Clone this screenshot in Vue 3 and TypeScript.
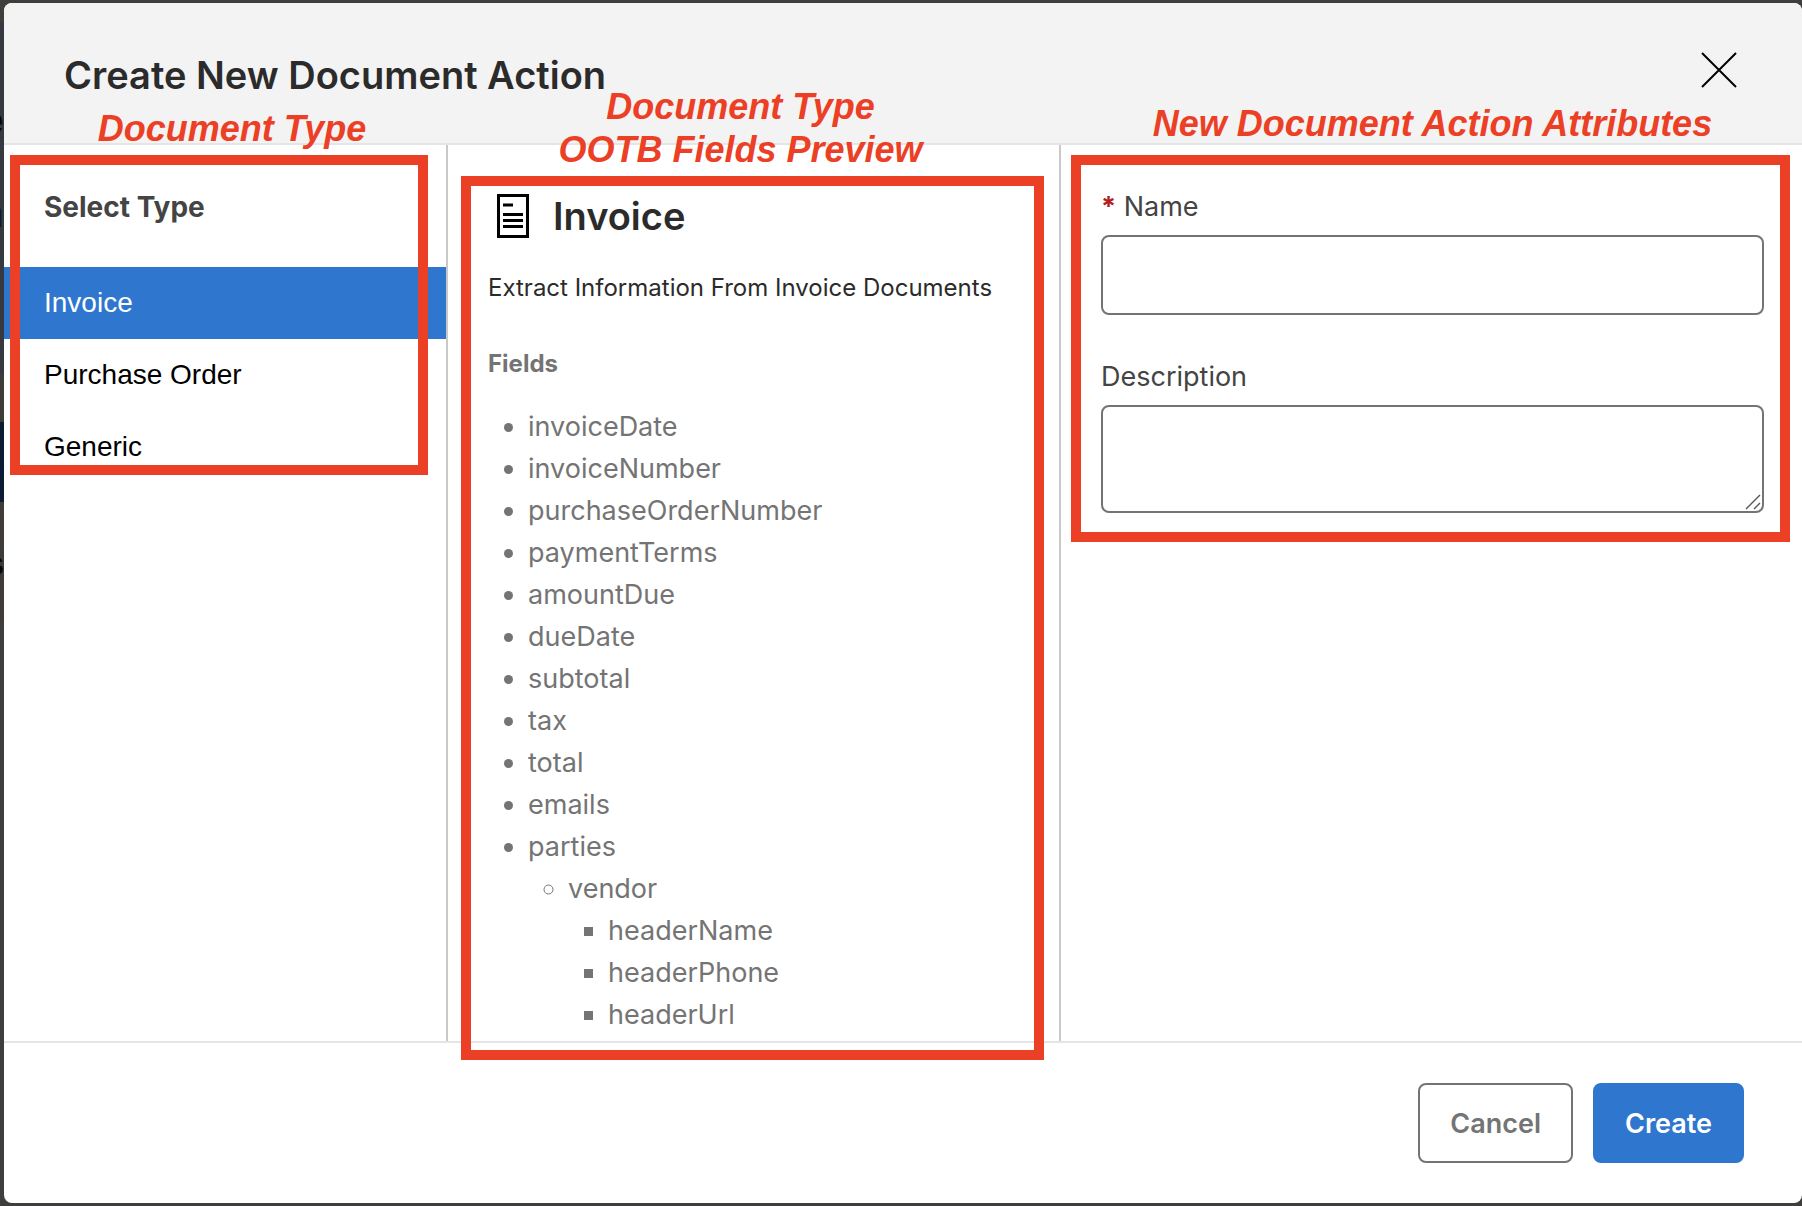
<script setup lang="ts">
import { ref } from 'vue'

interface Field {
  name: string
  children?: Field[]
}

const types = ['Invoice', 'Purchase Order', 'Generic']
const selected = ref('Invoice')
const name = ref('')
const description = ref('')

const fields: Field[] = [
  { name: 'invoiceDate' },
  { name: 'invoiceNumber' },
  { name: 'purchaseOrderNumber' },
  { name: 'paymentTerms' },
  { name: 'amountDue' },
  { name: 'dueDate' },
  { name: 'subtotal' },
  { name: 'tax' },
  { name: 'total' },
  { name: 'emails' },
  {
    name: 'parties',
    children: [
      {
        name: 'vendor',
        children: [{ name: 'headerName' }, { name: 'headerPhone' }, { name: 'headerUrl' }],
      },
    ],
  },
]
</script>

<template>
  <div class="backdrop">
    <!-- Sliver of the dimmed page that shows beside the dialog -->
    <div class="page" aria-hidden="true">
      <span class="page-title">e</span>
      <span class="page-link">a</span>
      <span class="page-row"></span>
      <span class="page-text">s</span>
    </div>

    <section class="modal" role="dialog" aria-labelledby="dialog-title">
      <header class="head">
        <h1 id="dialog-title">Create New Document Action</h1>
        <button class="close" type="button" aria-label="Close">
          <svg viewBox="0 0 36 36" width="36" height="36" fill="none" stroke="#000" stroke-width="2">
            <path d="M1 1L35 35M35 1L1 35" />
          </svg>
        </button>
      </header>

      <div class="body">
        <nav class="types">
          <h2 class="label strong">Select Type</h2>
          <button
            v-for="type in types"
            :key="type"
            type="button"
            class="type"
            :class="{ active: type === selected }"
            @click="selected = type"
          >
            {{ type }}
          </button>
          <div class="callout callout-types">
            <p class="note note-types">Document Type</p>
          </div>
        </nav>

        <main class="preview">
          <div class="preview-title">
            <svg viewBox="0 0 32 44" width="32" height="44" fill="none" stroke="#000" stroke-width="3">
              <rect x="1.5" y="1.5" width="29" height="41" />
              <path d="M6 11H16M6 20.5H26M6 26.5H26M6 32.5H26" />
            </svg>
            <h2>Invoice</h2>
          </div>
          <p class="summary">Extract Information From Invoice Documents</p>
          <h3>Fields</h3>
          <ul class="fields">
            <li v-for="field in fields" :key="field.name">
              {{ field.name }}
              <ul v-if="field.children">
                <li v-for="group in field.children" :key="group.name">
                  {{ group.name }}
                  <ul v-if="group.children">
                    <li v-for="leaf in group.children" :key="leaf.name">{{ leaf.name }}</li>
                  </ul>
                </li>
              </ul>
            </li>
          </ul>
          <div class="callout callout-preview">
            <p class="note note-preview">Document Type<br />OOTB Fields Preview</p>
          </div>
        </main>

        <form class="attributes" @submit.prevent>
          <label class="label" for="name"><span class="required">*</span> Name</label>
          <input id="name" v-model="name" type="text" />
          <label class="label" for="description">Description</label>
          <div class="area">
            <textarea id="description" v-model="description"></textarea>
            <svg class="grip" viewBox="0 0 16 16" width="16" height="16" fill="none" stroke="#555" stroke-width="1.4">
              <path d="M1 15L15 1M9 15L15 9" />
            </svg>
          </div>
          <div class="callout callout-attributes">
            <p class="note note-attributes">New Document Action Attributes</p>
          </div>
        </form>
      </div>

      <footer class="foot">
        <button class="btn" type="button">Cancel</button>
        <button class="btn primary" type="button">Create</button>
      </footer>
    </section>
  </div>
</template>

<style>
body {
  margin: 0;
}
</style>

<style scoped>
* {
  box-sizing: border-box;
}
.backdrop {
  position: relative;
  min-height: 100vh;
  padding: 3px 0 3px 4px;
  display: flex;
  background: #3e3e3d;
  font-family: Inter, 'Liberation Sans', sans-serif;
}
.page {
  position: absolute;
  top: 22px;
  left: 0;
  width: 4px;
  height: 600px;
  display: flex;
  flex-direction: column;
  align-items: flex-end;
  overflow: hidden;
  background: linear-gradient(#363a40 352px, #3e3b38 352px);
  font-weight: 600;
  color: #080808;
}
.page-title,
.page-link {
  font-size: 40px;
  line-height: 48px;
}
.page-title {
  margin-top: 74px;
}
.page-link {
  margin-top: 45px;
  color: #0a1b33;
}
.page-row {
  width: 4px;
  height: 80px;
  margin-top: 185px;
  background: #0a1b33;
}
.page-text {
  margin-top: 42px;
  font-size: 32px;
  line-height: 40px;
}
.modal {
  position: relative;
  flex: 1;
  display: flex;
  flex-direction: column;
  border-radius: 8px;
  background: #fff;
}
h1,
h2,
h3,
p,
ul {
  margin: 0;
  padding: 0;
}
h1,
.preview-title h2 {
  font-size: 38px;
  line-height: 48px;
  font-weight: 600;
  color: #2b2b2b;
}
.head {
  height: 142px;
  padding: 48px 65px 0 60px;
  display: flex;
  align-items: flex-start;
  justify-content: space-between;
  border-bottom: 2px solid #e5e5e5;
  border-radius: 8px 8px 0 0;
  background: #f3f3f3;
}
button {
  border: 0;
  padding: 0;
  cursor: pointer;
}
.close {
  display: flex;
  margin-top: 1px;
  background: none;
}
.body {
  flex: 1;
  display: flex;
  border-bottom: 2px solid #e5e5e5;
}
.types,
.preview,
.attributes {
  position: relative;
}
.types {
  width: 444px;
  border-right: 2px solid #c9c9c9;
}
.label {
  display: block;
  font-size: 27px;
  line-height: 36px;
  font-weight: 400;
  color: #444;
}
.strong {
  font-size: 28px;
  font-weight: 700;
  margin: 44px 40px 42px;
}
.type {
  display: block;
  width: 100%;
  height: 72px;
  padding: 0 40px;
  background: none;
  font-family: 'Liberation Sans', Arial, sans-serif;
  font-size: 28px;
  text-align: left;
  color: #000;
}
.type.active {
  background: #2e76ce;
  color: #fff;
}
.preview {
  width: 613px;
  padding: 47px 40px 0;
  border-right: 2px solid #c9c9c9;
}
.preview-title {
  display: flex;
  align-items: center;
  gap: 24px;
  padding-left: 9px;
}
.summary,
h3 {
  font-size: 24px;
  line-height: 32px;
}
.summary {
  margin-top: 32px;
  white-space: nowrap;
  color: #2b2b2b;
}
h3 {
  margin: 44px 0 26px;
  font-weight: 700;
  color: #747474;
}
.fields,
.fields ul {
  padding-left: 40px;
}
.fields {
  font-size: 27px;
  line-height: 42px;
  color: #747474;
}
.attributes {
  flex: 1;
  padding: 44px 38px 0 40px;
}
.required {
  font-weight: 700;
  color: #b0201c;
}
input,
textarea {
  display: block;
  width: 100%;
  padding: 0 24px;
  border: 2px solid #747474;
  border-radius: 8px;
  background: #fff;
  font: inherit;
  font-size: 27px;
}
input {
  height: 80px;
  margin: 10px 0 44px;
}
.area {
  position: relative;
  margin-top: 10px;
}
textarea {
  height: 108px;
  resize: none;
}
.grip {
  position: absolute;
  right: 3px;
  bottom: 3px;
}
.foot {
  display: flex;
  justify-content: flex-end;
  gap: 20px;
  padding: 40px 58px;
}
.btn {
  height: 80px;
  padding: 0 30px;
  border: 2px solid #747474;
  border-radius: 8px;
  background: #fff;
  color: #747474;
  font-family: inherit;
  font-size: 27px;
  font-weight: 600;
}
.btn.primary {
  border-color: #2e76ce;
  background: #2e76ce;
  color: #fff;
}
/* Highlight frames and their captions lie over the dialog */
.callout {
  position: absolute;
  border: 10px solid #ec4026;
  pointer-events: none;
}
.callout-types {
  top: 10px;
  left: 6px;
  right: 18px;
  height: 320px;
}
.callout-preview {
  top: 31px;
  left: 13px;
  right: 15px;
  bottom: -19px;
}
.callout-attributes {
  top: 10px;
  left: 10px;
  right: 12px;
  height: 387px;
}
.note {
  position: absolute;
  left: 0;
  right: 0;
  bottom: 100%;
  margin-bottom: 15px;
  font-family: 'Liberation Sans', Arial, sans-serif;
  font-size: 36px;
  line-height: 43px;
  font-weight: 700;
  font-style: italic;
  text-align: center;
  white-space: nowrap;
  color: #ec4026;
}
.note-types {
  padding-left: 26px;
}
.note-preview {
  padding-right: 24px;
}
.note-attributes {
  margin-bottom: 20px;
  padding-left: 4px;
}
</style>
